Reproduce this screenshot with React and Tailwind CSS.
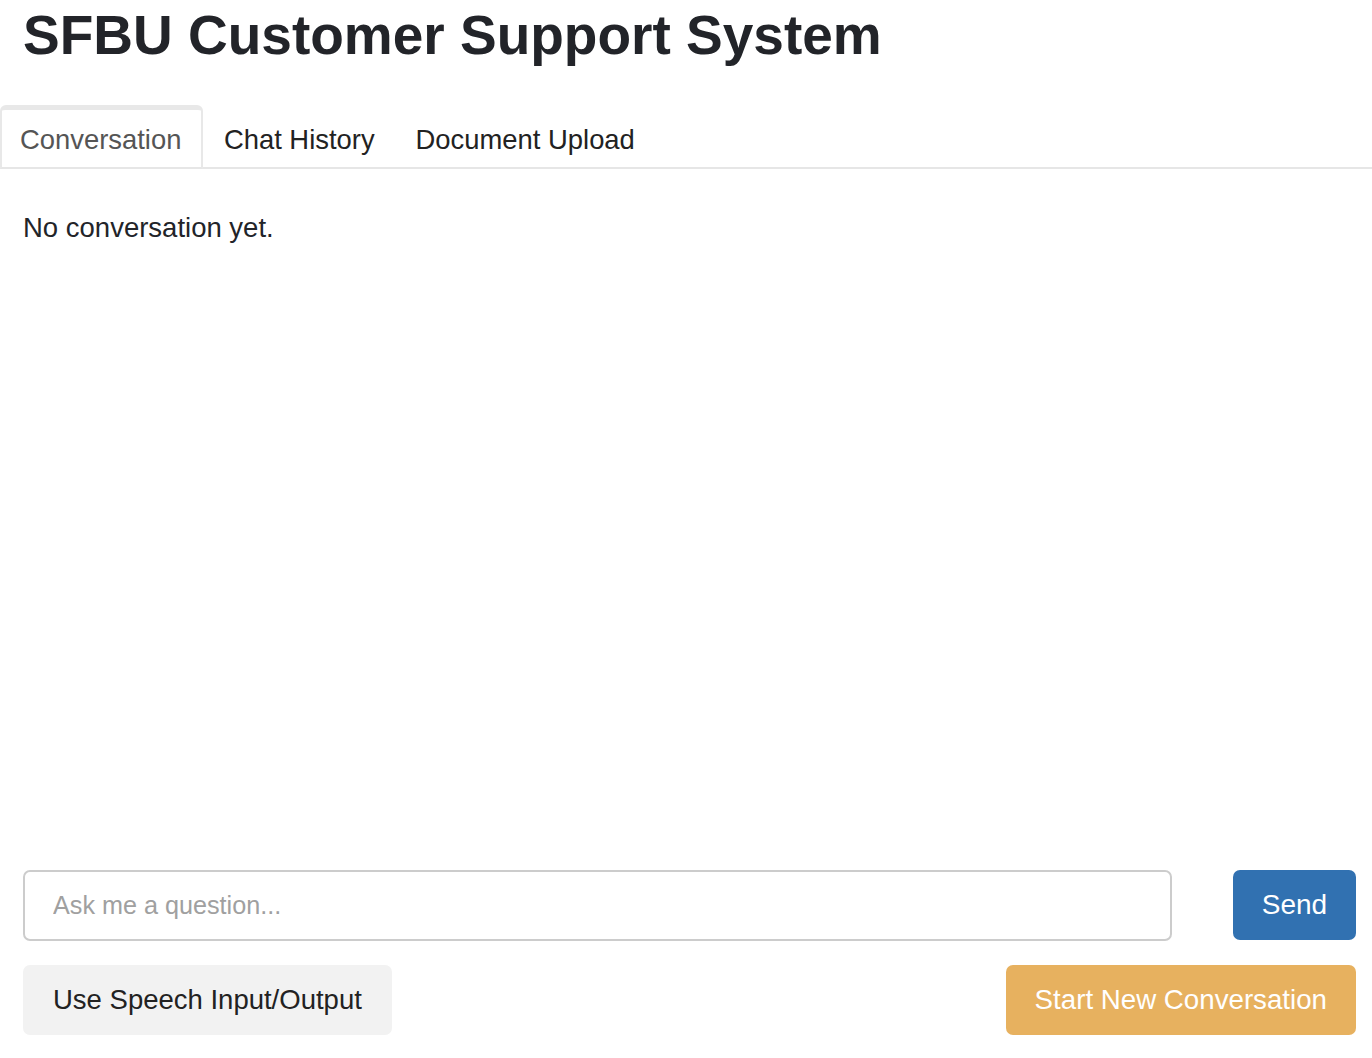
export default function App() {
  const tabs = ["Conversation", "Chat History", "Document Upload"];
  return (
    <div className="h-[1058px] w-full flex flex-col bg-white text-[#222] font-['Liberation_Sans',Arial,sans-serif]">
      <h1 className="px-[23px] pt-[2px] text-[55px] leading-[66px] font-bold text-[#222429]">
        SFBU Customer Support System
      </h1>

      <nav className="mt-[37px] flex border-b-2 border-[#e6e6e6] h-[64px]">
        {tabs.map((t, i) => (
          <div
            key={t}
            className={
              i === 0
                ? "pl-[18px] pr-[20px] pt-[9px] text-[27.4px] text-[#555] border-t-[5px] border-x-2 border-[#e8e8e8] rounded-t-md -mb-[2px] border-b-2 border-b-[#e6e6e6] bg-white"
                : "px-[20.5px] pt-[14px] text-[27.4px] text-[#222]"
            }
          >
            {t}
          </div>
        ))}
      </nav>

      <main className="flex-1 flex flex-col pl-[23px] pr-[16px]">
        <p className="pt-[38px] text-[27.5px] text-[#222429]">No conversation yet.</p>

        <div className="mt-auto flex items-center gap-[61px]">
          <input
            type="text"
            placeholder="Ask me a question..."
            className="flex-1 h-[71px] border-2 border-[#cccccc] rounded-[7px] px-[28px] text-[25.2px] placeholder:text-[#a0a0a0] outline-none"
          />
          <button className="h-[70px] w-[123px] bg-[#3171b1] text-white text-[28px] rounded-[7px] -mt-[2px]">
            Send
          </button>
        </div>

        <div className="mt-[24px] mb-[23px] flex justify-between">
          <button className="h-[70px] px-[30px] bg-[#f2f2f2] text-[#222] text-[27.5px] rounded-[7px]">
            Use Speech Input/Output
          </button>
          <button className="h-[70px] px-[29px] bg-[#e7b15f] text-white text-[27.7px] rounded-[7px]">
            Start New Conversation
          </button>
        </div>
      </main>
    </div>
  );
}
